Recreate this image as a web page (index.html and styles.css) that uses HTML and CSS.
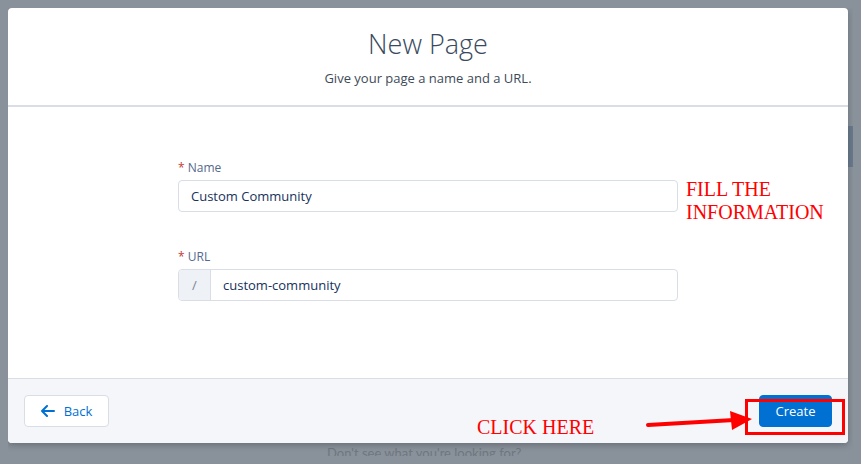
FILE: index.html
```html
<html>
  <head>
    <meta charset="utf-8">
    <title>New Page</title>
    <link rel="stylesheet" href="styles.css">
  </head>
<body>

<div class="backdrop">
  <p class="bg-tagline">A place where you can easily find solutions and ask questions.</p>
  <div class="bg-side-btn"></div>
  <p class="bg-bottom">Don't see what you're looking for?</p>
</div>

<div class="modal">
  <div class="modal-header">
    <h1>New Page</h1>
    <p>Give your page a name and a URL.</p>
  </div>

  <div class="modal-body">
    <div class="field">
      <label><span class="req">*</span> Name</label>
      <div class="input">Custom Community</div>
    </div>
    <div class="field">
      <label><span class="req">*</span> URL</label>
      <div class="input input-prefixed">
        <span class="prefix">/</span>
        <span class="value">custom-community</span>
      </div>
    </div>
  </div>

  <div class="modal-footer">
    <button class="btn btn-neutral">
      <svg width="14" height="12" viewBox="0 0 14 12"><path d="M6 1 L1 6 L6 11 M1 6 H13" fill="none" stroke="#0070d2" stroke-width="2" stroke-linecap="round" stroke-linejoin="round"/></svg>
      Back
    </button>
    <button class="btn btn-brand">Create</button>
  </div>

  <!-- notes drawn on top of the screenshot -->
  <div class="note note-fill">FILL THE<br>INFORMATION</div>
  <div class="note note-click">CLICK HERE</div>
  <svg class="note-arrow" width="110" height="24" viewBox="0 0 110 24">
    <path d="M2 17 L88 12" stroke="#ff0000" stroke-width="4" stroke-linecap="round"/>
    <path d="M84 3 L106 11 L86 22 Z" fill="#ff0000"/>
  </svg>
  <div class="note-box"></div>
</div>

</body></html>
```

FILE: styles.css
```css
body {
  margin: 8px;
  background: #89919a;
  font-family: "Open Sans", sans-serif;
  position: relative;
  height: 448px;
  overflow: hidden;
}

.backdrop p {
  margin: 0;
  color: #6f7780;
  font-family: Lato, sans-serif;
  font-size: 13px;
}

.bg-tagline {
  position: absolute;
  top: -7px;
  left: 255px;
}

.bg-bottom {
  position: absolute;
  top: 437px;
  left: 319px;
  color: #666e77;
}

.bg-side-btn {
  position: absolute;
  top: 118px;
  left: 840px;
  width: 20px;
  height: 41px;
  background: #69798b;
}

.modal {
  position: relative;
  width: 840px;
  height: 435px;
  background: #fff;
  border-radius: 4px;
  display: flex;
  flex-direction: column;
  box-shadow: 0 2px 6px rgba(40, 50, 60, 0.35);
}

.modal-header {
  height: 97px;
  border-bottom: 2px solid #d8dde6;
  text-align: center;
}

.modal-header h1 {
  margin: 17px 0 0;
  font-size: 27px;
  font-weight: 300;
  color: #3a4a5e;
  line-height: 37px;
}

.modal-header p {
  margin: 7px 0 0;
  font-size: 13px;
  color: #3e4a59;
}

.modal-body {
  flex: 1;
  padding: 52px 0 0 170px;
}

.field {
  width: 500px;
  margin-bottom: 36px;
}

.field label {
  display: block;
  font-size: 12px;
  color: #54698d;
  line-height: 18px;
  margin-bottom: 3px;
}

.req {
  color: #c23934;
}

.input {
  height: 30px;
  border: 1px solid #d8dde6;
  border-radius: 4px;
  padding: 0 12px;
  font-size: 13px;
  color: #16325c;
  line-height: 30px;
}

.input-prefixed {
  display: flex;
  padding: 0;
  overflow: hidden;
}

.prefix {
  width: 31px;
  background: #eef1f6;
  border-right: 1px solid #d8dde6;
  color: #7b8594;
  text-align: center;
}

.value {
  padding-left: 12px;
}

.modal-footer {
  height: 64px;
  background: #f4f6f9;
  border-top: 1px solid #d8dde6;
  border-radius: 0 0 4px 4px;
  display: flex;
  justify-content: space-between;
  align-items: center;
  padding: 0 16px;
}

.btn {
  height: 32px;
  border-radius: 4px;
  font-family: "Open Sans", sans-serif;
  font-size: 13px;
  cursor: pointer;
  display: flex;
  align-items: center;
  gap: 9px;
}

.btn-neutral {
  width: 85px;
  background: #fff;
  border: 1px solid #d8dde6;
  color: #0070d2;
  justify-content: center;
}

.btn-brand {
  width: 73px;
  background: #0070d2;
  border: 1px solid #0070d2;
  color: #fff;
  justify-content: center;
}

.note {
  position: absolute;
  color: #ff0000;
  font-family: "Liberation Serif", serif;
  font-size: 20px;
  line-height: 23px;
}

.note-fill {
  top: 170px;
  left: 678px;
}

.note-click {
  top: 408px;
  left: 469px;
}

.note-arrow {
  position: absolute;
  top: 400px;
  left: 638px;
}

.note-box {
  position: absolute;
  top: 391px;
  left: 737px;
  width: 94px;
  height: 30px;
  border: 3px solid #ff0000;
}
```
